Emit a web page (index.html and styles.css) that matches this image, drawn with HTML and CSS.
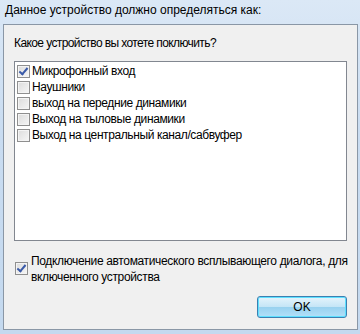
FILE: index.html
```html
<!DOCTYPE html>
<html lang="ru">
<head>
    <meta charset="UTF-8">
    <title>Устройство</title>
    <link rel="stylesheet" href="styles.css">
</head>
<body>
    <div class="frame">
        <div class="caption">Данное устройство должно определяться как:</div>
        <div class="panel">
            <div class="question">Какое устройство вы хотете поключить?</div>
            <div class="listbox">
                <label class="item"><span class="box checked"></span>Микрофонный вход</label>
                <label class="item"><span class="box"></span>Наушники</label>
                <label class="item"><span class="box"></span>выход на передние динамики</label>
                <label class="item"><span class="box"></span>Выход на тыловые динамики</label>
                <label class="item"><span class="box"></span>Выход на центральный канал/сабвуфер</label>
            </div>
            <label class="auto"><span class="box checked"></span><span class="auto-text">Подключение автоматического всплывающего диалога, для<br>включенного устройства</span></label>
            <div class="actions">
                <button type="button" class="ok">OK</button>
            </div>
        </div>
    </div>
</body>
</html>
```

FILE: styles.css
```css
body {
    margin: 0;
    font-family: "Liberation Sans", Arial, sans-serif;
    font-size: 12px;
    color: #000;
}

.frame {
    width: 360px;
    height: 334px;
    box-sizing: border-box;
    padding: 0 2px 4px 3px;
    background: linear-gradient(#dbe8f6, #c9dcf1 40%, #c4d9ef);
    display: flex;
    flex-direction: column;
}

.caption {
    height: 24px;
    line-height: 20px;
    padding-left: 2px;
}

.panel {
    flex: 1;
    background-color: #f0f0f0;
    border: 1px solid #8a97a6;
    display: flex;
    flex-direction: column;
    padding: 0 10px 0 10px;
}

.question {
    margin-top: 10px;
    height: 26px;
    line-height: 16px;
    letter-spacing: -0.6px;
}

.listbox {
    background-color: #fff;
    border: 1px solid #828790;
    height: 177px;
    padding-top: 1px;
}

.item {
    display: flex;
    align-items: center;
    height: 16px;
    padding-left: 2px;
    letter-spacing: -0.4px;
}

.box {
    width: 11px;
    height: 11px;
    flex: none;
    margin-right: 2px;
    border: 1px solid #8f8f8f;
    background: linear-gradient(135deg, #dcdcdc, #f6f6f6);
    box-shadow: inset 0 0 0 1px #f4f4f4;
    position: relative;
}

.box.checked::after {
    content: "";
    position: absolute;
    left: 3px;
    top: 0;
    width: 3px;
    height: 7px;
    border: solid #3a5aa8;
    border-width: 0 2px 2px 0;
    transform: rotate(40deg);
}

.auto {
    display: flex;
    align-items: flex-start;
    margin-top: 12px;
    line-height: 16px;
}

.auto-text {
    white-space: nowrap;
    letter-spacing: -0.35px;
}

.auto .box {
    margin-top: 9px;
    margin-left: 1px;
    margin-right: 3px;
}

.actions {
    margin-top: 11px;
    display: flex;
    justify-content: flex-end;
}

.ok {
    width: 90px;
    height: 22px;
    padding: 0;
    font-family: inherit;
    font-size: 12px;
    border: 1px solid #3c7fb1;
    border-radius: 3px;
    background: linear-gradient(#e5f4fc, #c4e5f6 50%, #98d1ef 51%, #b3e0f9);
    box-shadow: inset 0 0 0 1px #5ee0ff;
}
```
